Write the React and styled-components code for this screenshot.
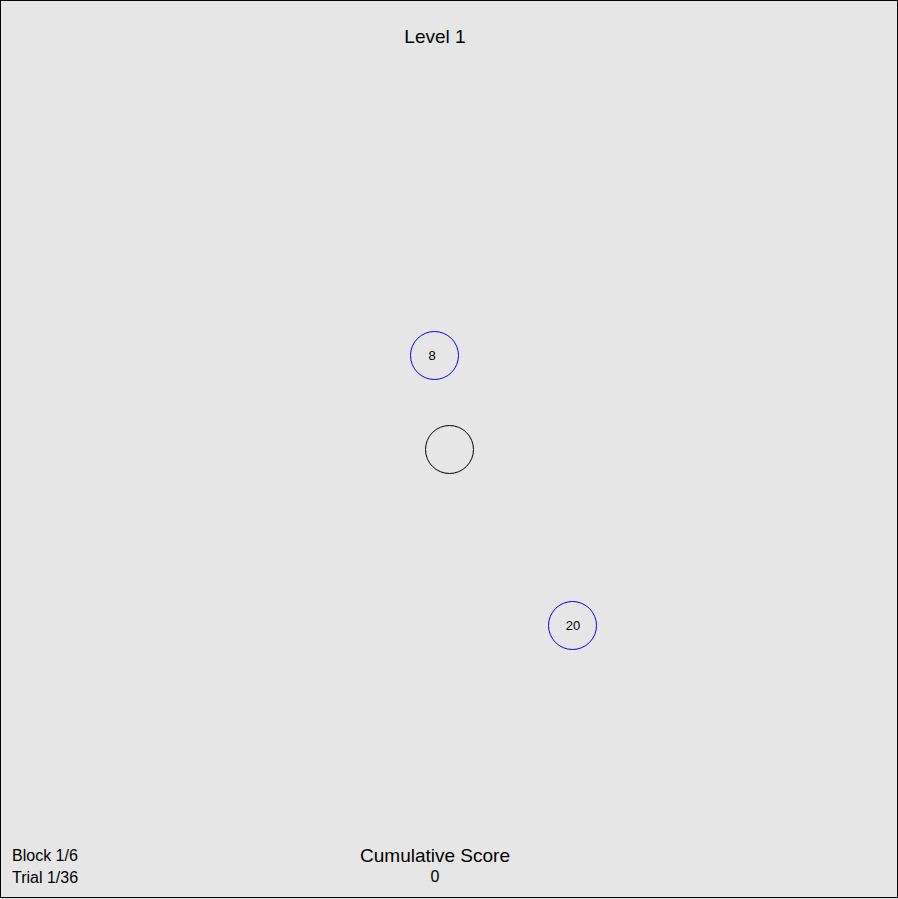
import React from "react";
import styled, { createGlobalStyle } from "styled-components";

const GlobalStyle = createGlobalStyle`
  html, body {
    margin: 0;
    padding: 0;
    background: #e6e6e6;
  }
  body {
    font-family: "Liberation Sans", Arial, sans-serif;
    color: #000;
  }
`;

const Board = styled.div`
  position: relative;
  box-sizing: border-box;
  width: 898px;
  height: 898px;
  border: 1px solid #000;
  background: #e6e6e6;
  display: flex;
  flex-direction: column;
`;

const Header = styled.header`
  padding: 25px 39px 0 11px;
  text-align: center;
  font-size: 19px;
  line-height: 22px;
`;

const Field = styled.div`
  flex: 1;
`;

const Footer = styled.footer`
  display: grid;
  grid-template-columns: 1fr auto 1fr;
  padding: 0 39px 8px 11px;
`;

const Stats = styled.div`
  font-size: 16px;
  line-height: 22px;
`;

const Score = styled.div`
  text-align: center;
`;

const ScoreTitle = styled.div`
  font-size: 19px;
  line-height: 22px;
`;

const ScoreValue = styled.div`
  font-size: 16px;
  line-height: 20px;
`;

const Circle = styled.div`
  position: absolute;
  box-sizing: border-box;
  width: 49px;
  height: 49px;
  border-radius: 50%;
  border: 1.4px solid ${({ $color }) => $color};
  display: flex;
  align-items: center;
  justify-content: center;
  font-size: 13px;
`;

const Label = styled.span`
  position: relative;
  left: ${({ $dx }) => $dx}px;
`;

const targets = [
  { id: "a", x: 409, y: 330, value: 8, dx: -2.5 },
  { id: "b", x: 547, y: 600, value: 20, dx: 0.5 },
];

const App = () => (
  <>
    <GlobalStyle />
    <Board>
      <Header>Level 1</Header>
      <Field>
        {targets.map((t) => (
          <Circle key={t.id} $color="#0000ff" style={{ left: t.x, top: t.y }}>
            <Label $dx={t.dx}>{t.value}</Label>
          </Circle>
        ))}
        <Circle $color="#000" style={{ left: 424, top: 424 }} />
      </Field>
      <Footer>
        <Stats>
          <div>Block 1/6</div>
          <div>Trial 1/36</div>
        </Stats>
        <Score>
          <ScoreTitle>Cumulative Score</ScoreTitle>
          <ScoreValue>0</ScoreValue>
        </Score>
        <div />
      </Footer>
    </Board>
  </>
);

export default App;
